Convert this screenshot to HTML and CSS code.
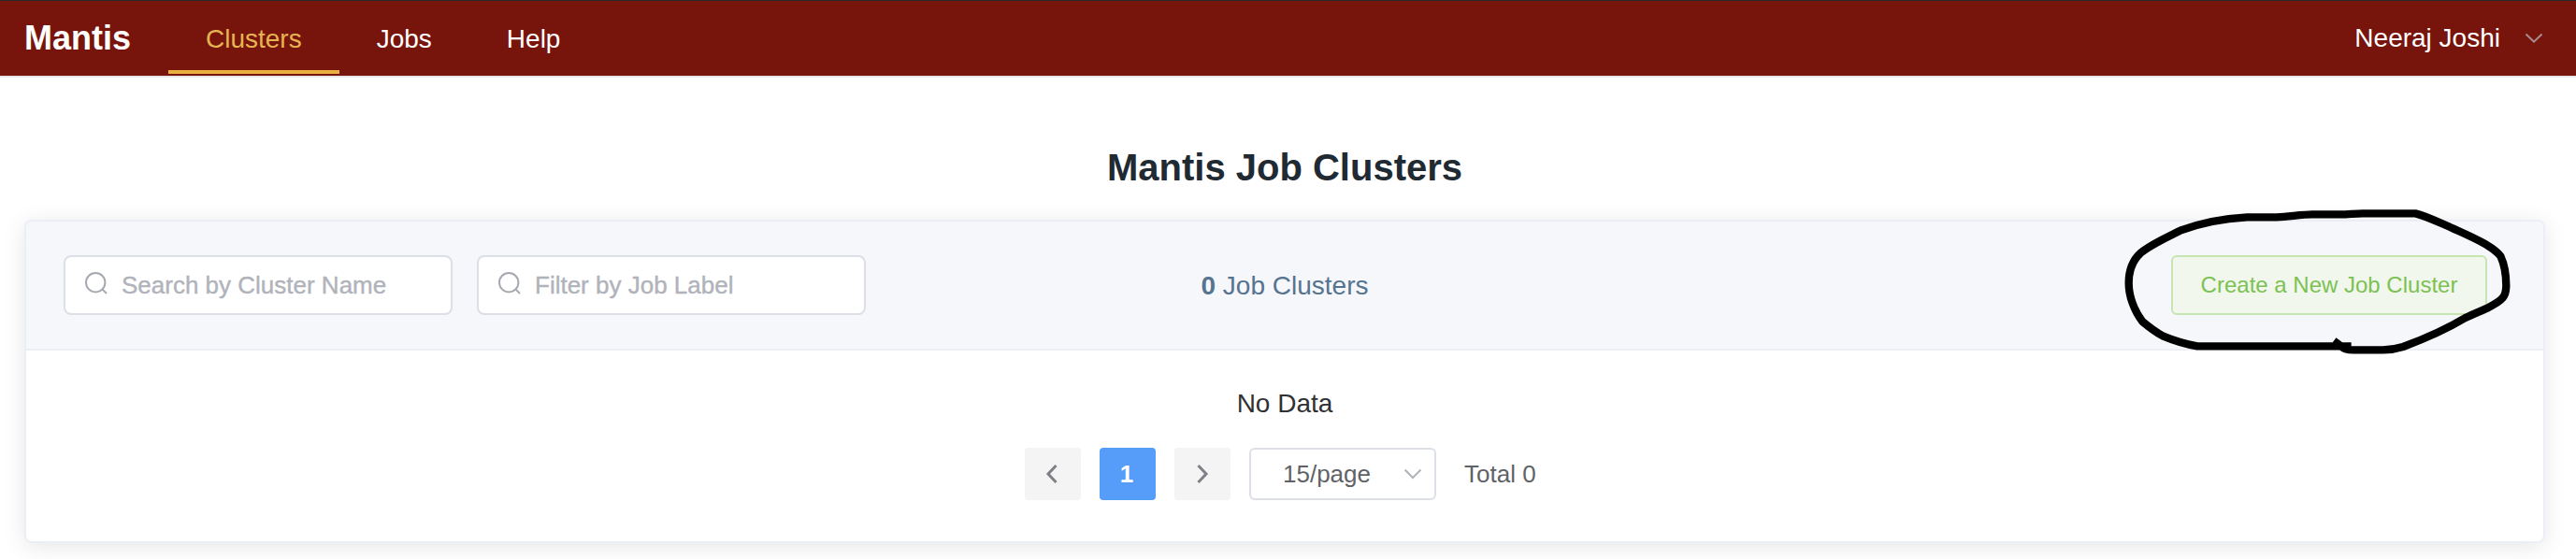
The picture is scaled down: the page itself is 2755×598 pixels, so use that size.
FILE: index.html
```html
<!DOCTYPE html>
<html lang="en">
<head>
<meta charset="utf-8">
<title>Mantis</title>
<link rel="stylesheet" href="styles.css">
</head>
<body>
<header class="navbar">
  <div class="brand">Mantis</div>
  <nav class="menu">
    <a class="menu-item active">Clusters</a>
    <a class="menu-item">Jobs</a>
    <a class="menu-item">Help</a>
  </nav>
  <div class="user">
    <span>Neeraj Joshi</span>
    <svg class="user-arrow" width="20" height="12" viewBox="0 0 20 12"><path d="M1.500 1.500 10 9.700 18.500 1.500"/></svg>
  </div>
</header>
<main class="page">
  <h1 class="title">Mantis Job Clusters</h1>
  <section class="card">
    <div class="card-header">
      <div class="filters">
        <label class="search">
          <svg class="search-icon" width="24" height="24" viewBox="0 0 24 24"><circle cx="11.200" cy="11.200" r="10.200"/><path d="M18.600 18.600 23 23"/></svg>
          <input class="search-input" type="text" placeholder="Search by Cluster Name">
        </label>
        <label class="search">
          <svg class="search-icon" width="24" height="24" viewBox="0 0 24 24"><circle cx="11.200" cy="11.200" r="10.200"/><path d="M18.600 18.600 23 23"/></svg>
          <input class="search-input" type="text" placeholder="Filter by Job Label">
        </label>
      </div>
      <div class="count"><strong>0</strong> Job Clusters</div>
      <div class="actions">
        <button class="create">Create a New Job Cluster</button>
        <svg class="marker" width="515" height="190" viewBox="0 0 1545 570">
          <path d="M824 511H330C290 504 250 491 219 478C195 465 173 448 154 432C127 397 110 350 110 308C110 270 122 236 148 212C180 185 227 164 275 140C340 115 420 101 490 97H585C625 96 660 88 700 88H805C825 87 840 85 860 85H1030C1065 93 1110 116 1150 133C1190 151 1230 168 1260 187Q1290 205 1303 222C1315 248 1321 285 1321 318C1320 350 1314 362 1260 389C1235 400 1212 409 1190 420C1120 462 1060 487 990 513Q958 523 925 523H830Q805 523 795 514L768 494"/>
        </svg>
      </div>
    </div>
    <div class="card-body">
      <div class="empty">No Data</div>
      <div class="pagination">
        <button class="page-btn"><svg width="14" height="22" viewBox="0 0 14 22"><path d="M11.500 2 3 11l8.500 9"/></svg></button>
        <button class="page-btn current">1</button>
        <button class="page-btn next"><svg width="14" height="22" viewBox="0 0 14 22"><path d="M2.500 2 11 11l-8.500 9"/></svg></button>
        <div class="size-select">
          <span>15/page</span>
          <svg width="20" height="12" viewBox="0 0 20 12"><path d="M1.500 1.500 10 10l8.500-8.500"/></svg>
        </div>
        <span class="total">Total 0</span>
      </div>
    </div>
  </section>
</main>
</body>
</html>
```
FILE: styles.css
```css
* { box-sizing: border-box; }
body {
  margin: 0;
  height: 598px;
  overflow: hidden;
  background: #fff;
  color: #303133;
  font-family: "Liberation Sans", Arial, sans-serif;
  font-size: 28px;
}
svg { display: block; fill: none; overflow: visible; }
.navbar {
  display: flex;
  align-items: stretch;
  height: 83px;
  padding: 0 35px 0 26px;
  background: #77140c;
  border-top: 1px solid #2b2829;
  border-bottom: 2px solid #e6e6e6;
  color: #fff;
}
.brand { width: 154px; font-size: 36px; font-weight: 700; line-height: 80px; }
.menu { display: flex; height: 78px; }
.menu-item { padding: 0 40px; line-height: 82px; border-bottom: 4px solid transparent; }
.menu-item.active { color: #e6b450; border-bottom-color: #e8b041; }
.user { display: flex; align-items: center; gap: 26px; margin-left: auto; line-height: 82px; }
.user-arrow { stroke: #aa8c92; stroke-width: 2; }
.page { padding: 73px 33px 0 26px; }
.title { margin: 0; font-size: 40px; line-height: 46px; text-align: center; color: #1f2a33; }
.card {
  height: 346px;
  margin-top: 33px;
  border: 2px solid #ebeef5;
  border-radius: 8px;
  background: #fff;
  box-shadow: 0 4px 24px rgba(0, 0, 0, .1);
}
.card-header {
  display: grid;
  grid-template-columns: 1fr auto 1fr;
  align-items: center;
  height: 138px;
  padding: 0 40px;
  background: #f5f7fb;
  border-bottom: 2px solid #ebeef5;
  border-radius: 6px 6px 0 0;
}
.filters { display: flex; gap: 26px; }
.search {
  display: flex;
  align-items: center;
  gap: 15px;
  width: 416px;
  height: 64px;
  padding: 0 20px 0 21px;
  background: #fff;
  border: 2px solid #dcdfe6;
  border-radius: 8px;
}
.search-icon { flex: none; stroke: #a6a9b0; stroke-width: 2; margin-top: -4px; }
.search-input { width: 330px; padding: 0; border: 0; outline: 0; background: none; font: 26px "Liberation Sans", Arial, sans-serif; }
.search-input::placeholder { color: #b0b3ba; opacity: 1; -webkit-text-stroke: .4px #b0b3ba; }
.count { color: #56738f; line-height: 32px; padding-top: 2px; }
.actions { position: relative; justify-self: end; margin-right: 20px; }
.create {
  display: block;
  width: 338px;
  height: 64px;
  padding: 0;
  border: 2px solid #c6e5b1;
  border-radius: 6px;
  background: #f1f7ec;
  color: #7cc153;
  font: 24px "Liberation Sans", Arial, sans-serif;
}
/* Hand-drawn loop over the create button */
.marker { position: absolute; left: -82px; top: -73px; stroke: #000; stroke-width: 25; stroke-linejoin: round; pointer-events: none; }
.empty { padding-top: 41px; line-height: 32px; text-align: center; }
.pagination { display: flex; justify-content: center; gap: 20px; margin-top: 31px; font-size: 26px; color: #606266; line-height: 56px; }
.page-btn {
  display: flex;
  align-items: center;
  justify-content: center;
  width: 60px;
  height: 56px;
  padding: 0 2px 0 0;
  border: 0;
  border-radius: 4px;
  background: #f4f4f5;
  font: 26px "Liberation Sans", Arial, sans-serif;
  stroke: #7f8186;
  stroke-width: 3;
}
.page-btn.next { padding: 0; }
.page-btn.current { background: #559df8; color: #fff; font-weight: 700; stroke: none; }
.size-select {
  display: flex;
  align-items: center;
  justify-content: space-between;
  width: 200px;
  height: 56px;
  padding: 0 13px 0 34px;
  border: 2px solid #dcdfe6;
  border-radius: 6px;
  stroke: #b0b3b9;
  stroke-width: 2;
}
.size-select span { stroke: none; }
.total { width: 86px; margin-left: 10px; }
```
